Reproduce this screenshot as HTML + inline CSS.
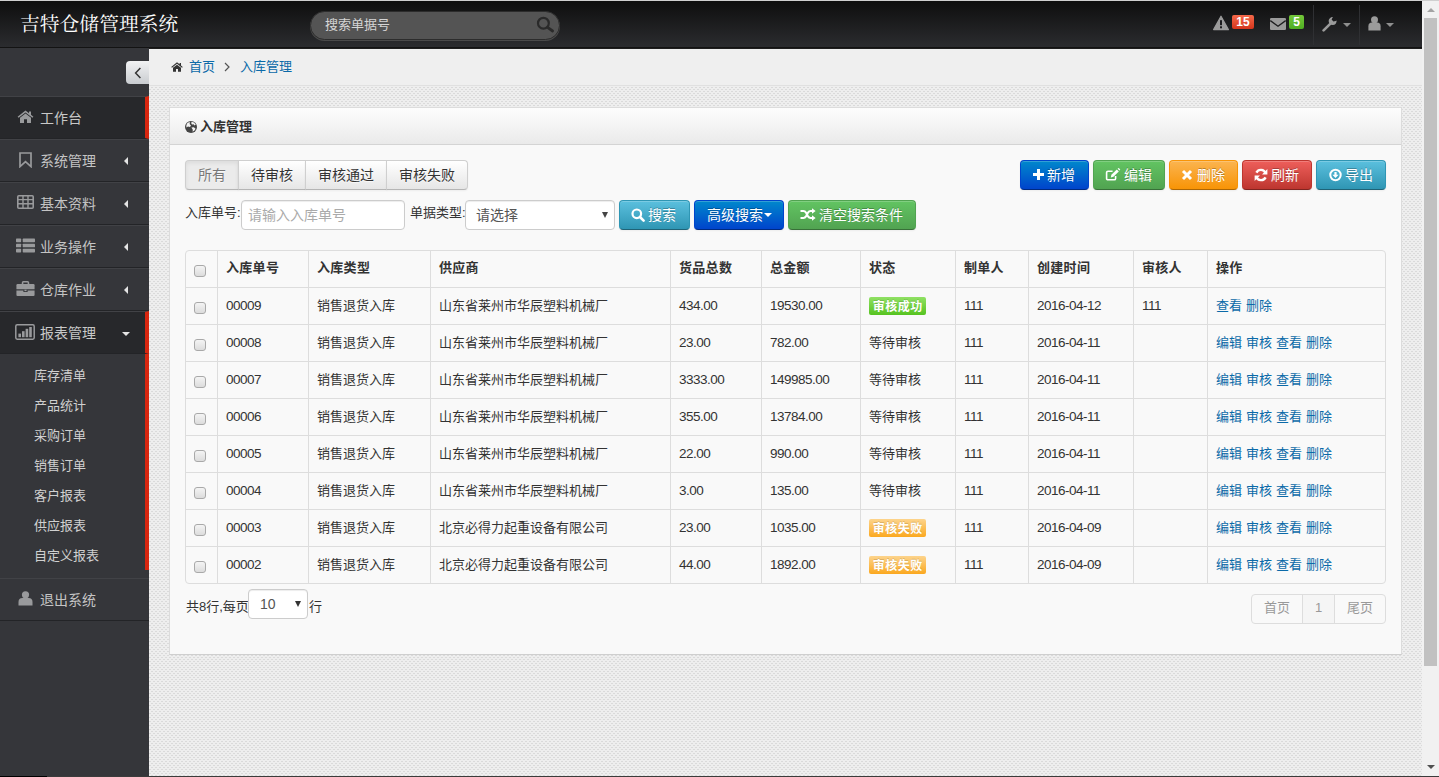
<!DOCTYPE html>
<html lang="zh-CN">
<head>
<meta charset="utf-8">
<title>吉特仓储管理系统</title>
<style>
*{box-sizing:border-box;margin:0;padding:0}
html,body{width:1439px;height:777px;overflow:hidden;background:#eaeaea}
body{position:relative;font-family:"Liberation Sans","Noto Sans CJK SC",sans-serif;font-size:13px;color:#333;line-height:20px}
a{color:#0b6aa8;text-decoration:none}
.abs{position:absolute}
svg{display:block}
/* top chrome line + bottom line */
#topline{left:0;top:0;width:1439px;height:1px;background:#cfcfcf}
#botline{left:0;top:776px;width:1439px;height:1px;background:linear-gradient(90deg,#000 47px,#3b3b3b 47px)}
/* header */
#header{left:0;top:1px;width:1422px;height:47px;background:linear-gradient(#0e0e0e,#2b2c2f);border-bottom:1px solid #131313}
#brand{left:20px;top:11px;font-family:"Liberation Serif","Noto Serif CJK SC",serif;font-size:19.8px;line-height:26px;color:#fff;white-space:nowrap;letter-spacing:0}
#search{left:310px;top:11px;width:250px;height:29px;border-radius:14.5px;background:#545454;border:1px solid #2c2c2c;box-shadow:0 1px 0 #4a4a4a}
#search span{position:absolute;left:14px;top:3px;font-size:13px;color:#d5d5d5}
/* sidebar */
#sidebar{left:0;top:48px;width:149px;height:728px;background:#35363a}
.mi{position:absolute;left:0;width:149px;height:43px;border-top:1px solid #414246;border-bottom:1px solid #232427;color:#c4c4c4;font-size:14px}
.mi .t{position:absolute;left:40px;top:11px;white-space:nowrap}
.mi.act{background:#27282b;border-right:4px solid #d8260f;color:#c8c8c8}
.sub{position:absolute;left:34px;font-size:13px;color:#d0d0d0;white-space:nowrap}
/* content */
#content{left:149px;top:48px;width:1273px;height:728px;border-top:1px solid #1e1e1e;background-color:#ebebeb}
#crumb{left:149px;top:49px;width:1273px;height:37px;background:#efefef;border-bottom:1px solid #e0e0e0}
/* scrollbar */
#sb{left:1422px;top:1px;width:17px;height:775px;background:#f1f1f1}
#sbthumb{left:1424px;top:18px;width:13px;height:648px;background:#c1c1c1}

.badge{top:15px;height:14px;border-radius:2px;color:#fff;font-weight:bold;font-size:12px;line-height:14px;text-align:center;font-family:"Liberation Sans",sans-serif}
.caret{width:0;height:0;border-left:4px solid transparent;border-right:4px solid transparent;border-top:4px solid #8f8f8f}

.ct{top:57px;font-size:13px;line-height:20px;white-space:nowrap}
#panel{left:169px;top:107px;width:1233px;height:548px;background:#f9f9f9;border:1px solid #dcdcdc;border-bottom-color:#cfcfcf}
#ptitle{left:170px;top:108px;width:1231px;height:37px;background:linear-gradient(#fdfdfd,#eaeaea);border-bottom:1px solid #d4d4d4}
#ptitle b{position:absolute;left:30px;top:9px;font-size:13px;color:#333;white-space:nowrap}
.btn{position:absolute;height:30px;border:1px solid #cfcfcf;border-bottom-color:#b5b5b5;font-size:14px;line-height:20px;padding:4px 0;text-align:center;color:#333;background:linear-gradient(#fff,#e6e6e6);white-space:nowrap;box-shadow:inset 0 1px 0 rgba(255,255,255,.2),0 1px 2px rgba(0,0,0,.05);border-radius:4px;text-shadow:0 1px 1px rgba(255,255,255,.75)}
.btn.l{text-align:left}
.btn.c{color:#fff;text-shadow:0 -1px 0 rgba(0,0,0,.25)}
.b-pri{background:linear-gradient(#0088cc,#0044cc);border-color:#0044cc #0044cc #002a80}
.b-suc{background:linear-gradient(#62c462,#51a351);border-color:#51a351 #51a351 #387038}
.b-war{background:linear-gradient(#fbb450,#f89406);border-color:#f89406 #f89406 #ad6704}
.b-dan{background:linear-gradient(#ee5f5b,#bd362f);border-color:#bd362f #bd362f #802420}
.b-inf{background:linear-gradient(#5bc0de,#2f96b4);border-color:#2f96b4 #2f96b4 #1f6377}
.lbl{position:absolute;font-size:13px;line-height:20px;color:#333;white-space:nowrap}
.inp{position:absolute;height:30px;border:1px solid #ccc;border-radius:4px;background:#fff;box-shadow:inset 0 1px 1px rgba(0,0,0,.075);font-size:14px;line-height:20px;padding:4px 6px;color:#555;white-space:nowrap}

#grid{left:185px;top:250px;width:1201px;table-layout:fixed;border-collapse:separate;border-spacing:0;border:1px solid #ddd;border-radius:4px;font-size:13px;line-height:20px;color:#333}
#grid th,#grid td{height:37px;padding:8px 0 8px 8px;border-top:1px solid #ddd;border-left:1px solid #ddd;text-align:left;vertical-align:top;white-space:nowrap;overflow:hidden}
#grid thead th{height:36px;border-top:0;font-weight:bold;letter-spacing:.3px;padding-top:7px;padding-bottom:9px}
#grid th:first-child,#grid td:first-child{border-left:0;position:relative}
.cb{position:absolute;left:8px;top:14px;width:12px;height:12px;border:1px solid #a9a9a9;border-radius:3px;background:linear-gradient(#f4f4f4,#dcdcdc);display:block}
tbody .cb{top:14px}
.tag{display:inline-block;width:57px;height:18px;line-height:21px;margin-top:1px;letter-spacing:.5px;padding-left:.5px;text-align:center;color:#fff;font-weight:bold;font-size:12px;border-radius:2px;vertical-align:top;text-shadow:0 -1px 0 rgba(0,0,0,.15)}
.tg{background:linear-gradient(#90e164,#56c320)}
.to{background:linear-gradient(#fdd48c,#fba81f)}
.pg{position:absolute;top:594px;height:30px;border:1px solid #ddd;background:#f9f9f9;font-size:13px;line-height:20px;padding:3px 0 5px;text-align:center;color:#999;white-space:nowrap}
.n{font-size:13.5px;letter-spacing:-0.5px}
#grid td a{margin-right:.4px}
</style>
</head>
<body>
<div id="content" class="abs"><svg width="1273" height="728"><defs><pattern id="dots" width="4" height="4" patternUnits="userSpaceOnUse"><rect width="4" height="4" fill="#eeeeee"/><rect x="0" y="0" width="2" height="1" fill="#dadada"/><rect x="2" y="2" width="2" height="1" fill="#dadada"/></pattern></defs><rect width="1273" height="728" fill="url(#dots)"/></svg></div>
<div id="crumb" class="abs"></div>
<div id="sidebar" class="abs"></div>
<div id="header" class="abs"></div>
<div id="brand" class="abs">吉特仓储管理系统</div>
<div id="search" class="abs"><span>搜索单据号</span></div>

<!-- header icons -->
<svg class="abs" style="left:536px;top:15px" width="20" height="18" viewBox="0 0 20 18"><circle cx="7.4" cy="8.2" r="5.4" fill="none" stroke="#2a2a2a" stroke-width="2.2"/><path d="M11.6 12.4L16.6 16" stroke="#2a2a2a" stroke-width="2.8" stroke-linecap="round"/></svg>
<svg class="abs" style="left:1213px;top:15px" width="16" height="16" viewBox="0 0 16 16"><path d="M8 1.2L15.4 14.6H0.6Z" fill="#9b9b9b" stroke="#9b9b9b" stroke-width="1.2" stroke-linejoin="round"/><rect x="7" y="5.2" width="2" height="5" fill="#1c1c1e"/><rect x="7" y="11.3" width="2" height="2" fill="#1c1c1e"/></svg>
<div class="abs badge" style="left:1232px;background:linear-gradient(#f5694a,#d5351b);width:22px">15</div>
<svg class="abs" style="left:1270px;top:18px" width="16" height="12" viewBox="0 0 16 12"><rect x="0" y="0" width="16" height="12" rx="1.2" fill="#9b9b9b"/><path d="M0.3 2.6L8 8.2L15.7 2.6" fill="none" stroke="#1c1c1e" stroke-width="1.3"/></svg>
<div class="abs badge" style="left:1289px;background:linear-gradient(#74c83a,#4fae22);width:15px">5</div>
<div class="abs" style="left:1313px;top:5px;width:1px;height:40px;background:#2f3033"></div>
<svg class="abs" style="left:1322px;top:16px" width="16" height="16" viewBox="0 0 16 16"><path d="M1.6 14.4L9.2 6.8" stroke="#9b9b9b" stroke-width="2.6" stroke-linecap="round"/><path d="M14.6 4.6A4 4 0 1 1 10.9 1.1L9.6 3.6L11.4 5.6L13.6 4.9Z" fill="#9b9b9b"/></svg>
<div class="abs caret" style="left:1343px;top:23px"></div>
<div class="abs" style="left:1359px;top:5px;width:1px;height:40px;background:#2f3033"></div>
<svg class="abs" style="left:1368px;top:16px" width="13" height="15" viewBox="0 0 13 15"><circle cx="6.5" cy="3.8" r="3.5" fill="#9b9b9b"/><path d="M0.4 14.4V10.2Q0.4 6.6 4 6.6H9Q12.6 6.6 12.6 10.2V14.4Z" fill="#9b9b9b"/></svg>
<div class="abs caret" style="left:1386px;top:23px"></div>


<!-- sidebar -->
<div class="abs" style="left:126px;top:61px;width:23px;height:23px;border-radius:4px 0 0 4px;background:linear-gradient(#f2f3f4,#c9ccd0)"></div>
<svg class="abs" style="left:133.5px;top:67px" width="8" height="12" viewBox="0 0 8 12"><path d="M6.4 1L1.6 6L6.4 11" fill="none" stroke="#333" stroke-width="1.5"/></svg>
<div class="abs" style="left:145px;top:354px;width:4px;height:216px;background:#d8260f"></div>
<div class="mi act" style="top:96px"><span class="t">工作台</span></div>
<svg class="abs" style="left:17px;top:110px" width="17" height="13.5" viewBox="0 0 17 15" preserveAspectRatio="none"><path d="M8.5 0.6L0.6 7.4L1.6 8.5L8.5 2.7L15.4 8.5L16.4 7.4L14 5.3V1.6H12V3.6Z" fill="#999a9c"/><path d="M8.5 4L3 8.6V14.4H7V10.4H10V14.4H14V8.6Z" fill="#999a9c"/></svg>
<div class="mi" style="top:139px"><span class="t">系统管理</span></div>
<svg class="abs" style="left:19px;top:152px" width="13" height="16" viewBox="0 0 13 16"><path d="M1 1H12V14.6L6.5 9.6L1 14.6Z" fill="none" stroke="#999a9c" stroke-width="1.7" stroke-linejoin="miter"/></svg>
<div class="abs" style="left:124px;top:156.5px;width:0;height:0;border-top:4px solid transparent;border-bottom:4px solid transparent;border-right:4px solid #e5e5e5"></div>
<div class="mi" style="top:182px"><span class="t">基本资料</span></div>
<svg class="abs" style="left:17px;top:195px" width="17" height="14" viewBox="0 0 17 14"><rect x="0.8" y="0.8" width="15.4" height="12.4" rx="1" fill="none" stroke="#999a9c" stroke-width="1.6"/><path d="M1 4.6H16M1 8.8H16M6 1V13M11 1V13" stroke="#999a9c" stroke-width="1.4"/></svg>
<div class="abs" style="left:124px;top:199.5px;width:0;height:0;border-top:4px solid transparent;border-bottom:4px solid transparent;border-right:4px solid #e5e5e5"></div>
<div class="mi" style="top:225px"><span class="t">业务操作</span></div>
<svg class="abs" style="left:16px;top:237.5px" width="19" height="15" viewBox="0 0 17 14" preserveAspectRatio="none"><g fill="#999a9c"><rect x="0" y="0.5" width="4.6" height="3.4" rx=".6"/><rect x="6" y="0.5" width="11" height="3.4" rx=".6"/><rect x="0" y="5.3" width="4.6" height="3.4" rx=".6"/><rect x="6" y="5.3" width="11" height="3.4" rx=".6"/><rect x="0" y="10.1" width="4.6" height="3.4" rx=".6"/><rect x="6" y="10.1" width="11" height="3.4" rx=".6"/></g></svg>
<div class="abs" style="left:124px;top:242.5px;width:0;height:0;border-top:4px solid transparent;border-bottom:4px solid transparent;border-right:4px solid #e5e5e5"></div>
<div class="mi" style="top:268px"><span class="t">仓库作业</span></div>
<svg class="abs" style="left:16px;top:281px" width="19" height="15.5" viewBox="0 0 18 15" preserveAspectRatio="none"><path d="M6.2 3V1.6Q6.2 0.8 7 0.8H11Q11.8 0.8 11.8 1.6V3" fill="none" stroke="#999a9c" stroke-width="1.5"/><path d="M1.4 3H16.6Q17.6 3 17.6 4V8H0.4V4Q0.4 3 1.4 3Z" fill="#999a9c"/><path d="M0.4 9.2H7V10.6H11V9.2H17.6V13.6Q17.6 14.6 16.6 14.6H1.4Q0.4 14.6 0.4 13.6Z" fill="#999a9c"/><rect x="8" y="8.4" width="2" height="1.4" fill="#999a9c"/></svg>
<div class="abs" style="left:124px;top:285.5px;width:0;height:0;border-top:4px solid transparent;border-bottom:4px solid transparent;border-right:4px solid #e5e5e5"></div>
<div class="mi act" style="top:311px"><span class="t">报表管理</span></div>
<svg class="abs" style="left:15px;top:323.5px" width="20" height="16" viewBox="0 0 20 16"><rect x="0.8" y="0.8" width="18.4" height="14.4" rx="1.4" fill="none" stroke="#999a9c" stroke-width="1.5"/><g fill="#999a9c"><rect x="3.4" y="9.6" width="2.6" height="3.6"/><rect x="7" y="7.2" width="2.6" height="6"/><rect x="10.6" y="4.8" width="2.6" height="8.4"/><rect x="14.2" y="3" width="2.6" height="10.2"/></g></svg>
<div class="abs" style="left:122px;top:332px;width:0;height:0;border-left:4px solid transparent;border-right:4px solid transparent;border-top:4px solid #e5e5e5"></div>
<div class="mi" style="top:578px"><span class="t">退出系统</span></div>
<svg class="abs" style="left:18px;top:591px" width="15" height="15" viewBox="0 0 15 15"><circle cx="7.5" cy="3.8" r="3.6" fill="#999a9c"/><path d="M0.5 14.6V11Q0.5 7 4.4 7H10.6Q14.5 7 14.5 11V14.6Z" fill="#999a9c"/></svg>
<div class="sub" style="top:366px">库存清单</div>
<div class="sub" style="top:396px">产品统计</div>
<div class="sub" style="top:426px">采购订单</div>
<div class="sub" style="top:456px">销售订单</div>
<div class="sub" style="top:486px">客户报表</div>
<div class="sub" style="top:516px">供应报表</div>
<div class="sub" style="top:546px">自定义报表</div>


<!-- breadcrumb -->
<svg class="abs" style="left:171px;top:62px" width="12" height="10" viewBox="0 0 12 11" preserveAspectRatio="none"><path d="M6 0.3L0.2 5.4L1 6.2L6 1.9L11 6.2L11.8 5.4L10 3.8V1.2H8.6V2.6Z" fill="#333"/><path d="M6 3L2 6.4V10.7H5V7.7H7V10.7H10V6.4Z" fill="#333"/></svg>
<a class="abs ct" style="left:189px">首页</a>
<svg class="abs" style="left:224px;top:62px" width="6" height="10" viewBox="0 0 6 10"><path d="M1 1L5 5L1 9" fill="none" stroke="#555" stroke-width="1.2"/></svg>
<a class="abs ct" style="left:240px">入库管理</a>


<!-- panel -->
<div id="panel" class="abs"></div>
<div id="ptitle" class="abs"><b>入库管理</b></div>
<svg class="abs" style="left:185px;top:121px" width="12" height="12" viewBox="0 0 12 12"><circle cx="6" cy="6" r="6" fill="#444"/><path d="M6.6 0.8Q9.4 1 10.8 3.4L9.4 4.4L8.6 3.2L7 3.6L6.2 2.2Z" fill="#f3f3f3"/><path d="M2 2.6Q3.6 1 5 1.2L4.6 3L6 4.4L5 6L3 5.6L1.4 6.6Q1 4.4 2 2.6Z" fill="#f3f3f3"/><path d="M6.4 6.6L8.8 6.2L10.6 7.8Q9.8 10 7.6 10.8L7.8 8.8Z" fill="#f3f3f3"/></svg>

<!-- tabs -->
<div class="btn" style="left:185px;top:160px;width:54px;border-radius:4px 0 0 4px;background:#ebebeb;color:#777;box-shadow:inset 0 2px 4px rgba(0,0,0,.07),0 1px 2px rgba(0,0,0,.05)">所有</div>
<div class="btn" style="left:238px;top:160px;width:68px;border-radius:0">待审核</div>
<div class="btn" style="left:305px;top:160px;width:82px;border-radius:0">审核通过</div>
<div class="btn" style="left:386px;top:160px;width:82px;border-radius:0 4px 4px 0">审核失败</div>


<!-- action buttons -->
<div class="btn c b-pri l" style="left:1020px;top:160px;width:69px;padding-left:26px">新增</div>
<svg class="abs" style="left:1033px;top:169px" width="11" height="11" viewBox="0 0 11 11"><path d="M5.5 0V11M0 5.5H11" stroke="#fff" stroke-width="3"/></svg>
<div class="btn c b-suc l" style="left:1093px;top:160px;width:72px;padding-left:30px">编辑</div>
<svg class="abs" style="left:1105px;top:168px" width="16" height="13" viewBox="0 0 16 13"><path d="M10.6 8V10.4Q10.6 11.8 9.2 11.8H3Q1.6 11.8 1.6 10.4V4.6Q1.6 3.2 3 3.2H7.6" fill="none" stroke="#fff" stroke-width="1.6"/><path d="M5.8 9.4L6.4 6.8L11.8 1.4L13.8 3.4L8.4 8.8Z" fill="#fff"/><path d="M12.6 0.8L13.2 0.2Q13.6 -0.1 14 0.3L15 1.3Q15.3 1.7 15 2L14.4 2.6Z" fill="#fff"/></svg>
<div class="btn c b-war l" style="left:1169px;top:160px;width:69px;padding-left:27px">删除</div>
<svg class="abs" style="left:1181px;top:169px" width="12" height="12" viewBox="0 0 12 12"><path d="M2 2L10 10M10 2L2 10" stroke="#fff" stroke-width="3"/></svg>
<div class="btn c b-dan l" style="left:1242px;top:160px;width:70px;padding-left:28px">刷新</div>
<svg class="abs" style="left:1254px;top:168px" width="14" height="14" viewBox="0 0 14 14"><path d="M11.6 5.2A5 5 0 0 0 2.4 4.6" fill="none" stroke="#fff" stroke-width="2.4"/><path d="M13.4 1V6.4H8Z" fill="#fff"/><path d="M2.4 8.8A5 5 0 0 0 11.6 9.4" fill="none" stroke="#fff" stroke-width="2.4"/><path d="M0.6 13V7.6H6Z" fill="#fff"/></svg>
<div class="btn c b-inf l" style="left:1316px;top:160px;width:70px;padding-left:28px">导出</div>
<svg class="abs" style="left:1328.5px;top:168px" width="13" height="14" viewBox="0 0 13 14"><circle cx="6.5" cy="7" r="5.2" fill="none" stroke="#fff" stroke-width="2"/><path d="M5.4 4H7.6V6.8H9.6L6.5 10L3.4 6.8H5.4Z" fill="#fff"/></svg>

<!-- search row -->
<div class="lbl" style="left:185px;top:203px">入库单号:</div>
<div class="inp" style="left:241px;top:200px;width:164px;color:#aaa">请输入入库单号</div>
<div class="lbl" style="left:410px;top:203px">单据类型:</div>
<div class="inp" style="left:465px;top:200px;width:150px;padding-left:10px">请选择</div>
<div class="abs" style="left:601.5px;top:212px;width:0;height:0;border-left:3px solid transparent;border-right:3px solid transparent;border-top:6px solid #444"></div>
<div class="btn c b-inf l" style="left:619px;top:200px;width:71px;padding-left:28px">搜索</div>
<svg class="abs" style="left:631px;top:208px" width="14" height="14" viewBox="0 0 14 14"><circle cx="5.8" cy="5.8" r="4.3" fill="none" stroke="#fff" stroke-width="2.2"/><path d="M9 9L12.6 12.6" stroke="#fff" stroke-width="2.6" stroke-linecap="round"/></svg>
<div class="btn c b-pri l" style="left:694px;top:200px;width:90px;padding-left:12px">高级搜索</div>
<div class="abs" style="left:764px;top:213px;width:0;height:0;border-left:4px solid transparent;border-right:4px solid transparent;border-top:4px solid #fff"></div>
<div class="btn c b-suc l" style="left:788px;top:200px;width:128px;padding-left:30px">清空搜索条件</div>
<svg class="abs" style="left:800px;top:208px" width="16" height="13" viewBox="0 0 16 13"><path d="M0.5 3H3.4Q5 3 6 4.6L8 8.4Q9 10 10.6 10H12.4" fill="none" stroke="#fff" stroke-width="2"/><path d="M0.5 10H3.4Q5 10 6 8.4L8 4.6Q9 3 10.6 3H12.4" fill="none" stroke="#fff" stroke-width="2"/><path d="M12 0.2L15.6 3L12 5.8Z" fill="#fff"/><path d="M12 7.2L15.6 10L12 12.8Z" fill="#fff"/></svg>

<!-- table -->
<table id="grid" class="abs"><colgroup><col style="width:31px"><col style="width:91px"><col style="width:122px"><col style="width:240px"><col style="width:91px"><col style="width:99px"><col style="width:95px"><col style="width:73px"><col style="width:105px"><col style="width:74px"><col style="width:178px"></colgroup>
<thead><tr><th><i class="cb"></i></th><th>入库单号</th><th>入库类型</th><th>供应商</th><th>货品总数</th><th>总金额</th><th>状态</th><th>制单人</th><th>创建时间</th><th>审核人</th><th>操作</th></tr></thead>
<tbody>
<tr><td><i class="cb"></i></td><td class="n">00009</td><td>销售退货入库</td><td>山东省莱州市华辰塑料机械厂</td><td class="n">434.00</td><td class="n">19530.00</td><td><span class="tag tg">审核成功</span></td><td class="n">111</td><td class="n">2016-04-12</td><td class="n">111</td><td><a>查看</a> <a>删除</a></td></tr>
<tr><td><i class="cb"></i></td><td class="n">00008</td><td>销售退货入库</td><td>山东省莱州市华辰塑料机械厂</td><td class="n">23.00</td><td class="n">782.00</td><td>等待审核</td><td class="n">111</td><td class="n">2016-04-11</td><td></td><td><a>编辑</a> <a>审核</a> <a>查看</a> <a>删除</a></td></tr>
<tr><td><i class="cb"></i></td><td class="n">00007</td><td>销售退货入库</td><td>山东省莱州市华辰塑料机械厂</td><td class="n">3333.00</td><td class="n">149985.00</td><td>等待审核</td><td class="n">111</td><td class="n">2016-04-11</td><td></td><td><a>编辑</a> <a>审核</a> <a>查看</a> <a>删除</a></td></tr>
<tr><td><i class="cb"></i></td><td class="n">00006</td><td>销售退货入库</td><td>山东省莱州市华辰塑料机械厂</td><td class="n">355.00</td><td class="n">13784.00</td><td>等待审核</td><td class="n">111</td><td class="n">2016-04-11</td><td></td><td><a>编辑</a> <a>审核</a> <a>查看</a> <a>删除</a></td></tr>
<tr><td><i class="cb"></i></td><td class="n">00005</td><td>销售退货入库</td><td>山东省莱州市华辰塑料机械厂</td><td class="n">22.00</td><td class="n">990.00</td><td>等待审核</td><td class="n">111</td><td class="n">2016-04-11</td><td></td><td><a>编辑</a> <a>审核</a> <a>查看</a> <a>删除</a></td></tr>
<tr><td><i class="cb"></i></td><td class="n">00004</td><td>销售退货入库</td><td>山东省莱州市华辰塑料机械厂</td><td class="n">3.00</td><td class="n">135.00</td><td>等待审核</td><td class="n">111</td><td class="n">2016-04-11</td><td></td><td><a>编辑</a> <a>审核</a> <a>查看</a> <a>删除</a></td></tr>
<tr><td><i class="cb"></i></td><td class="n">00003</td><td>销售退货入库</td><td>北京必得力起重设备有限公司</td><td class="n">23.00</td><td class="n">1035.00</td><td><span class="tag to">审核失败</span></td><td class="n">111</td><td class="n">2016-04-09</td><td></td><td><a>编辑</a> <a>审核</a> <a>查看</a> <a>删除</a></td></tr>
<tr><td><i class="cb"></i></td><td class="n">00002</td><td>销售退货入库</td><td>北京必得力起重设备有限公司</td><td class="n">44.00</td><td class="n">1892.00</td><td><span class="tag to">审核失败</span></td><td class="n">111</td><td class="n">2016-04-09</td><td></td><td><a>编辑</a> <a>审核</a> <a>查看</a> <a>删除</a></td></tr>
</tbody></table>


<!-- footer -->
<div class="lbl" style="left:186px;top:597px">共8行,每页</div>
<div class="inp" style="left:248px;top:589px;width:60px;padding-left:11px">10</div>
<div class="abs" style="left:295px;top:601px;width:0;height:0;border-left:3.5px solid transparent;border-right:3.5px solid transparent;border-top:6px solid #333"></div>
<div class="lbl" style="left:309px;top:597px">行</div>
<div class="pg" style="left:1251px;width:52px;border-radius:4px 0 0 4px">首页</div>
<div class="pg" style="left:1302px;width:33px;background:#f5f5f5">1</div>
<div class="pg" style="left:1334px;width:52px;border-radius:0 4px 4px 0">尾页</div>


<div id="sb" class="abs"></div>
<div id="sbthumb" class="abs"></div>
<div class="abs" style="left:1426.5px;top:8px;width:0;height:0;border-left:4px solid transparent;border-right:4px solid transparent;border-bottom:4.5px solid #a3a3a3"></div>
<div class="abs" style="left:1426.5px;top:765px;width:0;height:0;border-left:4px solid transparent;border-right:4px solid transparent;border-top:4.5px solid #505050"></div>
<div id="topline" class="abs"></div>
<div id="botline" class="abs"></div>
</body>
</html>
